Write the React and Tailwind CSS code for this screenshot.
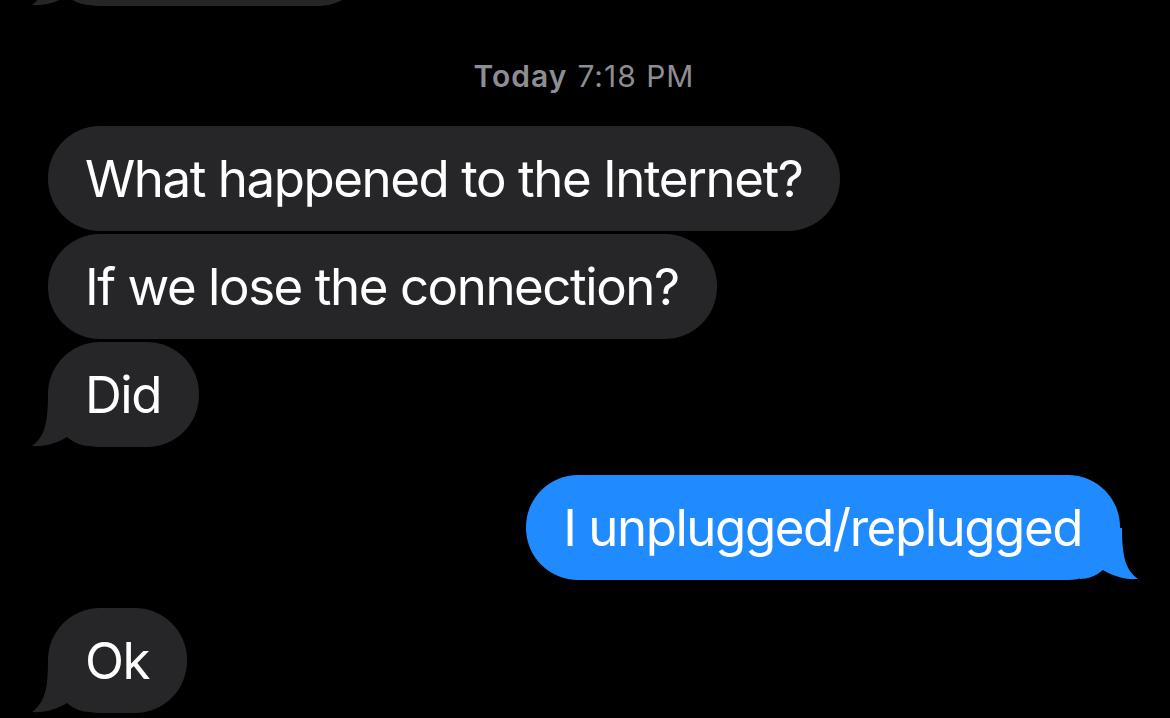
import React from "react";

const font = { fontFamily: "Inter, 'Noto Sans', sans-serif" };

function Tail({ side = "left", color }) {
  // little curled horn under the bubble corner
  const pos = side === "left" ? "left-[-16px]" : "right-[-18px] -scale-x-100";
  return (
    <svg
      className={`absolute bottom-0 ${pos}`}
      width="58"
      height="52"
      viewBox="0 0 58 52"
    >
      <path
        d="M16 0 C16 30 12 42 0 51 C13 52 25 48 35 42 C42 48 50 51 58 51 L58 0 Z"
        fill={color}
      />
    </svg>
  );
}

function Bubble({ text, tail, blue, className = "" }) {
  const color = blue ? "#1f8bff" : "#262629";
  return (
    <div
      className={`relative flex h-[105px] items-center rounded-[52px] pl-[37px] pr-[38px] text-[51px] leading-[61px] tracking-[-1.45px] text-white ${
        blue ? "bg-[#1f8bff]" : "bg-[#262629]"
      } ${className}`}
    >
      <span className="relative z-10 whitespace-nowrap">{text}</span>
      {tail && <Tail side={blue ? "right" : "left"} color={color} />}
    </div>
  );
}

export default function App() {
  return (
    <div
      className="h-[718px] w-[1170px] overflow-hidden bg-black pl-[48px] pr-[50px]"
      style={font}
    >
      <div className="flex flex-col items-start">
        <Bubble text="" tail className="mt-[-99px] w-[322px]" />

        <div className="mt-[53px] flex w-full justify-center text-[30px] leading-[34px] tracking-[1px] text-[#8d8d93]">
          <span className="font-semibold">Today</span>
          <span className="ml-[10px]">7:18 PM</span>
        </div>

        <div className="mt-[33px] flex flex-col items-start gap-[3px]">
          <Bubble text="What happened to the Internet?" />
          <Bubble text="If we lose the connection?" />
          <Bubble text="Did" tail />
        </div>

        <div className="mt-[28px] flex w-full justify-end">
          <Bubble text="I unplugged/replugged" tail blue />
        </div>

        <div className="mt-[28px]">
          <Bubble text="Ok" tail />
        </div>
      </div>
    </div>
  );
}
